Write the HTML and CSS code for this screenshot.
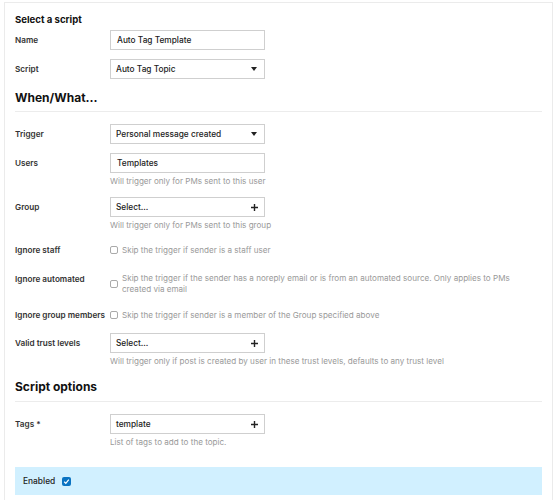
FILE: index.html
```html
<!DOCTYPE html>
<html lang="en">
<head>
    <meta charset="UTF-8">
    <title>Automation script</title>
    <link rel="stylesheet" href="styles.css">
</head>
<body>
    <div class="panel">
        <h3 class="small-title">Select a script</h3>

        <div class="row">
            <div class="label">Name</div>
            <div class="control">
                <div class="box">Auto Tag Template</div>
            </div>
        </div>
        <div class="row">
            <div class="label">Script</div>
            <div class="control">
                <div class="box select">Auto Tag Topic
                    <svg class="caret" width="6" height="4" viewBox="0 0 6 4"><path d="M0 0h6L3 4z" fill="#222"/></svg>
                </div>
            </div>
        </div>

        <h2 class="section-title">When/What...</h2>

        <div class="row">
            <div class="label">Trigger</div>
            <div class="control">
                <div class="box select">Personal message created
                    <svg class="caret" width="6" height="4" viewBox="0 0 6 4"><path d="M0 0h6L3 4z" fill="#222"/></svg>
                </div>
            </div>
        </div>
        <div class="row">
            <div class="label">Users</div>
            <div class="control">
                <div class="box">Templates</div>
                <div class="help">Will trigger only for PMs sent to this user</div>
            </div>
        </div>
        <div class="row">
            <div class="label">Group</div>
            <div class="control">
                <div class="box select">Select...
                    <svg class="plus" width="7" height="7" viewBox="0 0 7 7"><path d="M3.5 0v7M0 3.5h7" stroke="#222" stroke-width="1.4"/></svg>
                </div>
                <div class="help">Will trigger only for PMs sent to this group</div>
            </div>
        </div>

        <div class="row check-row staff-row">
            <div class="label">Ignore staff</div>
            <div class="check-wrap">
                <span class="checkbox"></span>
                <span class="check-text">Skip the trigger if sender is a staff user</span>
            </div>
        </div>
        <div class="row check-row auto-row">
            <div class="label">Ignore automated</div>
            <div class="check-wrap">
                <span class="checkbox"></span>
                <span class="check-text">Skip the trigger if the sender has a noreply email or is from an automated source. Only applies to PMs created via email</span>
            </div>
        </div>
        <div class="row check-row">
            <div class="label">Ignore group members</div>
            <div class="check-wrap">
                <span class="checkbox"></span>
                <span class="check-text">Skip the trigger if sender is a member of the Group specified above</span>
            </div>
        </div>

        <div class="row">
            <div class="label">Valid trust levels</div>
            <div class="control">
                <div class="box select">Select...
                    <svg class="plus" width="7" height="7" viewBox="0 0 7 7"><path d="M3.5 0v7M0 3.5h7" stroke="#222" stroke-width="1.4"/></svg>
                </div>
                <div class="help">Will trigger only if post is created by user in these trust levels, defaults to any trust level</div>
            </div>
        </div>

        <h2 class="section-title options-title">Script options</h2>

        <div class="row">
            <div class="label">Tags *</div>
            <div class="control">
                <div class="box select">template
                    <svg class="plus" width="7" height="7" viewBox="0 0 7 7"><path d="M3.5 0v7M0 3.5h7" stroke="#222" stroke-width="1.4"/></svg>
                </div>
                <div class="help">List of tags to add to the topic.</div>
            </div>
        </div>

        <div class="enabled-bar">
            <span>Enabled</span>
            <span class="checkbox checked">
                <svg width="7" height="7" viewBox="0 0 7 7"><path d="M1.2 3.8l1.6 1.5 3-3.6" fill="none" stroke="#fff" stroke-width="1.2"/></svg>
            </span>
        </div>
    </div>
</body>
</html>
```

FILE: styles.css
```css
body {
    margin: 0;
    font-family: Inter, "Noto Sans", sans-serif;
    color: #222;
    background: #fff;
}
.panel {
    margin: 2px 2px 0 4px;
    border: 1px solid #ebebeb;
    border-bottom: none;
    padding: 10px 10px 20px 10px;
    height: 520px;
    box-sizing: border-box;
}
.small-title {
    margin: 0 0 3px 0;
    font-size: 9.6px;
    line-height: 14px;
    font-weight: 700;
    color: #111;
}
.section-title {
    margin: 0 0 12px 0;
    padding-bottom: 4px;
    border-bottom: 1px solid #ececec;
    font-size: 12px;
    line-height: 18px;
    font-weight: 700;
    color: #111;
}
.row + .section-title {
    margin-top: 10px;
}
.row + .options-title {
    margin-top: 11px;
    padding-bottom: 5px;
}
.row {
    display: flex;
    margin-bottom: 9px;
}
.label {
    width: 95px;
    flex-shrink: 0;
    font-size: 8.2px;
    line-height: 20px;
    font-weight: 600;
    color: #333;
}
.control {
    width: 155px;
}
.box {
    height: 20px;
    box-sizing: border-box;
    border: 1px solid #cfcfcf;
    padding: 0 6px;
    font-size: 8.3px;
    line-height: 18px;
    font-weight: 500;
    color: #222;
    display: flex;
    align-items: center;
    justify-content: space-between;
}
.box.select {
    padding-left: 5px;
}
.caret {
    margin-right: 1px;
}
.help {
    margin-top: 2px;
    font-size: 8.1px;
    line-height: 12px;
    color: #999;
    white-space: nowrap;
}
.row:has(.help) {
    margin-bottom: 10px;
}
.check-row {
    padding: 3px 0;
    margin-bottom: 9px;
}
.staff-row {
    margin-bottom: 11px;
}
.auto-row {
    margin-bottom: 8px;
}
.check-row .label {
    line-height: 12px;
}
.check-wrap {
    display: flex;
    align-items: center;
    width: 420px;
}
.check-text {
    margin-left: 4px;
    font-size: 8.1px;
    line-height: 11px;
    color: #999;
}
.checkbox {
    width: 8px;
    height: 8px;
    flex-shrink: 0;
    box-sizing: border-box;
    border: 1px solid #aaa;
    border-radius: 2px;
    background: #fff;
}
.checkbox.checked {
    width: 9px;
    height: 9px;
    border: none;
    background: #0a73c2;
    display: flex;
    align-items: center;
    justify-content: center;
}
.enabled-bar {
    margin-top: 19px;
    height: 28px;
    background: #d1f0ff;
    display: flex;
    align-items: center;
    gap: 7px;
    padding-left: 8px;
    font-size: 8.4px;
    font-weight: 500;
    color: #222;
}
```
